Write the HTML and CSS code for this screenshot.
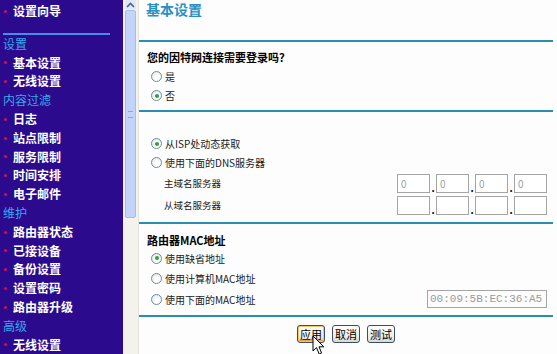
FILE: index.html
```html
<!DOCTYPE html>
<html lang="zh-CN">

<head>
    <meta charset="UTF-8">
    <title>基本设置</title>
    <link rel="stylesheet" href="styles.css">
</head>

<body>
    <div class="page">
        <nav class="side">
            <div class="item">设置向导</div>
            <div class="side-rule"></div>
            <div class="group">设置</div>
            <div class="item">基本设置</div>
            <div class="item">无线设置</div>
            <div class="group">内容过滤</div>
            <div class="item">日志</div>
            <div class="item">站点限制</div>
            <div class="item">服务限制</div>
            <div class="item">时间安排</div>
            <div class="item">电子邮件</div>
            <div class="group">维护</div>
            <div class="item">路由器状态</div>
            <div class="item">已接设备</div>
            <div class="item">备份设置</div>
            <div class="item">设置密码</div>
            <div class="item">路由器升级</div>
            <div class="group">高级</div>
            <div class="item">无线设置</div>
        </nav>

        <div class="scroll">
            <div class="scroll-up">
                <svg width="9" height="6" viewBox="0 0 9 6"><path d="M1 5 L4.5 1.5 L8 5" fill="none" stroke="#4d6185" stroke-width="1.6"/></svg>
            </div>
            <div class="thumb"><span class="grip"></span></div>
        </div>

        <main class="main">
            <h1 class="title">基本设置</h1>
            <div class="rule rule-first"></div>

            <div class="question">您的因特网连接需要登录吗？</div>
            <label class="radio-row"><span class="radio"></span>是</label>
            <label class="radio-row"><span class="radio checked"></span>否</label>
            <div class="rule rule-second"></div>

            <label class="radio-row first-dns"><span class="radio checked"></span>从ISP处动态获取</label>
            <label class="radio-row"><span class="radio"></span>使用下面的DNS服务器</label>
            <div class="ip-row">
                <span class="ip-label">主域名服务器</span>
                <div class="ip">
                    <span class="field">0</span><span class="dot">.</span><span class="field">0</span><span class="dot">.</span><span class="field">0</span><span class="dot">.</span><span class="field">0</span>
                </div>
            </div>
            <div class="ip-row">
                <span class="ip-label">从域名服务器</span>
                <div class="ip">
                    <span class="field"></span><span class="dot">.</span><span class="field"></span><span class="dot">.</span><span class="field"></span><span class="dot">.</span><span class="field"></span>
                </div>
            </div>
            <div class="rule rule-third"></div>

            <div class="question mac-title">路由器MAC地址</div>
            <label class="radio-row"><span class="radio checked"></span>使用缺省地址</label>
            <label class="radio-row tall"><span class="radio"></span>使用计算机MAC地址</label>
            <div class="mac-row">
                <label class="radio-row"><span class="radio"></span>使用下面的MAC地址</label>
                <span class="mac-field">00:09:5B:EC:36:A5</span>
            </div>
            <div class="rule rule-fourth"></div>

            <div class="buttons">
                <button class="btn hot">应用</button>
                <button class="btn">取消</button>
                <button class="btn">测试</button>
                <svg class="cursor" width="13" height="21" viewBox="0 0 13 21">
                    <path d="M1 1 L1 16 L4.5 12.6 L7.2 19 L9.6 18 L7 11.8 L11.8 11.8 Z" fill="#fff" stroke="#000" stroke-width="1" stroke-linejoin="round"/>
                </svg>
            </div>
        </main>
    </div>
</body>

</html>
```

FILE: styles.css
```css
body {
    margin: 0;
    background-color: #fdfdfd;
    font-family: "Noto Sans CJK SC", "DejaVu Sans", sans-serif;
    overflow: hidden;
}

.page {
    display: flex;
    height: 354px;
}

/* left menu */
.side {
    width: 123px;
    flex: none;
    background-color: #2c0a8e;
    padding-top: 2px;
    box-sizing: border-box;
}

.item,
.group {
    height: 18.8px;
    line-height: 18.8px;
    font-size: 12px;
    white-space: nowrap;
}

.item {
    display: flex;
    align-items: center;
    color: #fff;
    font-weight: bold;
}

.item::before {
    content: '';
    width: 3px;
    height: 3px;
    border-radius: 50%;
    background-color: #d4124c;
    margin: 0 6px 0 4px;
}

.group {
    color: #33a9ee;
    padding-left: 3px;
}

.side-rule {
    height: 2px;
    margin: 12px 13px 0 3px;
    background-color: #4a8be4;
}

/* scrollbar */
.scroll {
    width: 16px;
    flex: none;
    background-color: #f4f2ec;
    border-right: 1px solid #e4e1d8;
    padding: 0 2px;
    box-sizing: border-box;
}

.scroll-up {
    height: 9px;
    display: flex;
    justify-content: center;
    align-items: center;
    background-color: #dfe7f8;
}

.thumb {
    height: 208px;
    margin-top: 1px;
    background-color: #c3d4fa;
    border: 1px solid #a8bde6;
    border-radius: 2px;
    box-sizing: border-box;
    display: flex;
    justify-content: center;
    align-items: center;
}

.grip {
    width: 5px;
    height: 5px;
    border-top: 1px solid #8fa6d6;
    border-bottom: 1px solid #8fa6d6;
}

/* content */
.main {
    flex: 1;
    padding: 0 4px 0 0;
    display: flex;
    flex-direction: column;
    font-size: 10px;
    color: #1a1a1a;
}

.title {
    margin: 0;
    height: 18px;
    line-height: 18px;
    padding-left: 7px;
    font-size: 14px;
    font-weight: bold;
    color: #2a8fc4;
}

.rule {
    height: 2px;
    flex: none;
    background-color: #2a8db2;
}

.rule-first {
    margin-top: 22px;
}

.rule-second {
    margin-top: 5px;
}

.rule-third {
    margin-top: 6px;
}

.rule-fourth {
    margin-top: 6px;
}

.question {
    height: 19px;
    line-height: 19px;
    margin-top: 6px;
    padding-left: 8px;
    font-size: 11px;
    font-weight: bold;
    color: #000;
}

.mac-title {
    height: 18px;
    line-height: 18px;
    margin-top: 7px;
}

.radio-row {
    display: flex;
    align-items: center;
    height: 19px;
    padding-left: 12px;
    gap: 3px;
    white-space: nowrap;
}

.mac-title + .radio-row {
    height: 18px;
}

.radio-row.tall {
    height: 22px;
}

.first-dns {
    margin-top: 22px;
}

.radio {
    width: 11px;
    height: 11px;
    box-sizing: border-box;
    border-radius: 50%;
    border: 1px solid #6d88ad;
    background: radial-gradient(circle at 60% 65%, #fff 30%, #dcdcd4 100%);
    position: relative;
    flex: none;
}

.radio.checked::after {
    content: '';
    position: absolute;
    left: 2.5px;
    top: 2.5px;
    width: 4px;
    height: 4px;
    border-radius: 50%;
    background-color: #2ea32e;
}

.ip-row {
    display: flex;
    align-items: center;
    height: 22px;
    padding-left: 25px;
}

.ip-label {
    flex: 1;
    font-size: 9.5px;
}

.ip {
    display: flex;
    align-items: flex-end;
    margin-right: 6px;
}

.field {
    width: 33px;
    height: 19px;
    box-sizing: border-box;
    border: 1px solid #a5a5a5;
    background-color: #fff;
    color: #a0a0a0;
    font-size: 10px;
    line-height: 17px;
    padding-left: 3px;
}

.dot {
    width: 6px;
    text-align: center;
    font-weight: bold;
    line-height: 10px;
    color: #000;
}

.mac-row {
    display: flex;
    align-items: center;
    justify-content: space-between;
    height: 20px;
}

.mac-row .radio-row {
    height: 20px;
}

.mac-field {
    width: 120px;
    height: 18px;
    box-sizing: border-box;
    border: 1px solid #a5a5a5;
    margin-right: 6px;
    font-family: "Liberation Mono", monospace;
    font-size: 11px;
    line-height: 16px;
    color: #9a9a9a;
    padding-left: 2px;
    white-space: nowrap;
    overflow: hidden;
}

.buttons {
    display: flex;
    justify-content: center;
    gap: 7px;
    margin-top: 8px;
    position: relative;
}

.btn {
    height: 18px;
    padding: 0 2px;
    font-family: "Noto Sans CJK SC", sans-serif;
    font-size: 11px;
    line-height: 14px;
    color: #000;
    border: 1px solid #3c4e67;
    border-radius: 3px;
    background: linear-gradient(#ffffff, #ecebe4 70%, #d8d6cc);
}

.btn.hot {
    box-shadow: inset 0 0 0 1px #f6c56a, inset 0 -1px 0 1px #e9a43c;
}

.cursor {
    position: absolute;
    left: 173px;
    top: 10px;
}
```
